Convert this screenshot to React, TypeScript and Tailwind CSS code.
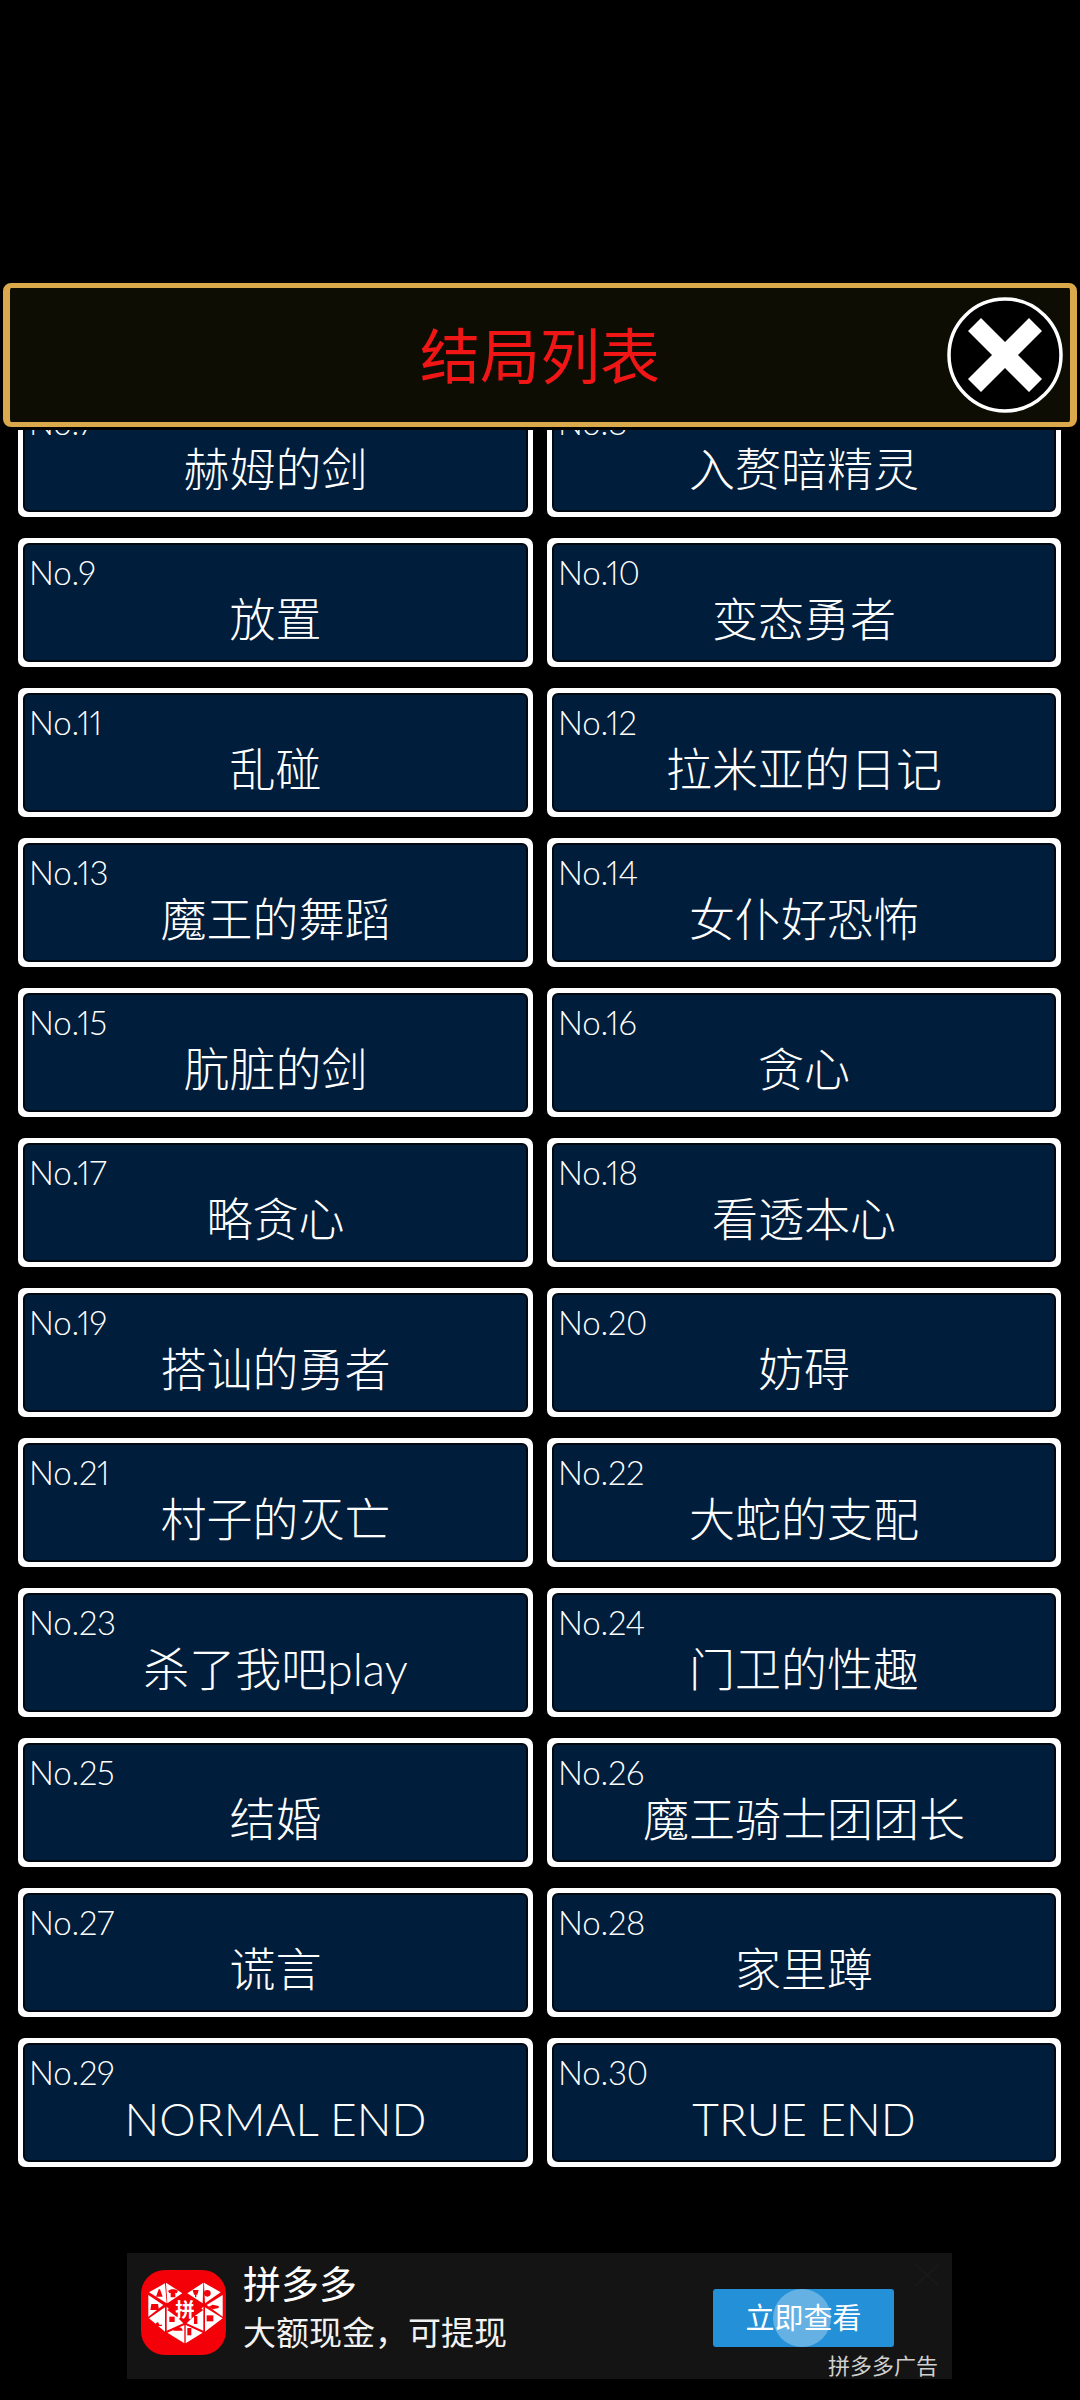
import React from 'react';

const endings: [string, string][] = [
    ['No.7', '赫姆的剑'], ['No.8', '入赘暗精灵'],
    ['No.9', '放置'], ['No.10', '变态勇者'],
    ['No.11', '乱碰'], ['No.12', '拉米亚的日记'],
    ['No.13', '魔王的舞蹈'], ['No.14', '女仆好恐怖'],
    ['No.15', '肮脏的剑'], ['No.16', '贪心'],
    ['No.17', '略贪心'], ['No.18', '看透本心'],
    ['No.19', '搭讪的勇者'], ['No.20', '妨碍'],
    ['No.21', '村子的灭亡'], ['No.22', '大蛇的支配'],
    ['No.23', '杀了我吧play'], ['No.24', '门卫的性趣'],
    ['No.25', '结婚'], ['No.26', '魔王骑士团团长'],
    ['No.27', '谎言'], ['No.28', '家里蹲'],
    ['No.29', 'NORMAL END'], ['No.30', 'TRUE END'],
];

const EndingCard: React.FC<{ no: string; name: string }> = ({ no, name }) => (
    <div className="h-[129px] rounded-[7px] bg-white p-[5px]">
        <div className="h-full rounded-[6px] bg-[#001d3b] border-2 border-[#000811] text-white font-light flex flex-col">
            <div className="pl-[4px] pt-[7px] text-[33px] leading-[40px] h-[47px] tracking-[-0.2px] proportional-nums">{no}</div>
            <div className="text-center text-[46px] leading-[54px]">{name}</div>
        </div>
    </div>
);

const CloseIcon = () => (
    <svg viewBox="0 0 116 116" className="w-[116px] h-[116px]">
        <circle cx="58" cy="58" r="56" fill="#000" stroke="#fff" strokeWidth="3.5" />
        <path d="M34 21 L58 45 L82 21 L95 34 L71 58 L95 82 L82 95 L58 71 L34 95 L21 82 L45 58 L21 34 Z" fill="#fff" />
    </svg>
);

// coordinates taken straight off a 3x crop of the logo
const heartTiles = [
    '57,97 105,70 110,130',
    '108,68 157,100 112,130',
    '55,105 100,135 55,170',
    '57,175 105,142 105,215',
    '110,140 160,190 110,212',
    '112,218 163,195 163,250',
    '167,195 218,218 167,250',
    '170,190 220,140 220,212',
    '225,142 278,175 225,215',
    '230,135 278,105 278,170',
    '222,68 272,97 225,130',
    '220,68 172,100 218,130',
];

const PddLogo = () => (
    <svg viewBox="33 30 255 255" className="w-[85px] h-[85px]">
        <rect x="33" y="30" width="255" height="255" rx="72" fill="#f40009" />
        {heartTiles.map((points) => (
            <polygon key={points} points={points} fill="#fff" />
        ))}
        <polygon points="165,112 220,150 165,188 112,150" fill="#f40009" />
        <text x="165" y="172" textAnchor="middle" fontSize="58" fontWeight="700" fill="#fff" fontFamily="Noto Sans CJK SC">拼</text>
        <g fill="#f40009">
            <path d="M86 88 l4 0 l8 22 h-20 Z" />
            <path d="M114 92 l10 -4 l10 0 l10 4 l-4 8 l-4 -2 v14 h-14 v-14 l-4 2 Z" />
            <path d="M64 132 h20 l3 18 h-26 Z" />
            <path d="M78 190 l6 -4 l4 8 l8 0 v4 h-22 Z" />
            <path d="M118 170 h16 v16 h-16 Z" />
            <path d="M130 212 a14 11 0 0 1 28 0 Z" />
            <path d="M172 204 h12 v22 h-12 Z" />
            <path d="M192 168 h10 v24 h-10 Z" />
            <path d="M230 166 h20 v18 h-20 Z" />
            <path d="M236 140 l12 -6 l18 4 v6 l-18 4 Z" />
            <circle cx="232" cy="100" r="10" />
            <path d="M188 90 h18 l-4 14 h-3 v8 h-4 v-8 h-3 Z" />
        </g>
    </svg>
);

const AdBanner = () => (
    <div className="mx-[127px] w-[825px] h-[126px] bg-[#141414] flex items-start relative font-normal">
        <div className="ml-[14px] mt-[17px]"><PddLogo /></div>
        <div className="ml-[17px] flex flex-col">
            <div className="text-[38px] leading-[46px] mt-[7px] text-white">拼多多</div>
            <div className="text-[33px] leading-[40px] mt-[6px] text-[#f2f2f2]">大额现金，可提现</div>
        </div>
        <div className="absolute left-[586px] top-[36px] w-[181px] h-[58px] rounded-[3px] bg-[#2490d8] overflow-hidden flex items-center justify-center text-[29px] text-white">
            <div className="absolute left-[60px] top-0 w-[58px] h-[58px] rounded-full bg-white/30" />
            <span className="relative">立即查看</span>
        </div>
        <div className="absolute right-[14px] bottom-0 text-[22px] leading-[26px] text-[#d0d0d0]">拼多多广告</div>
        <svg viewBox="0 0 26 24" className="absolute left-[787px] top-[10px] w-[26px] h-[24px]">
            <path d="M1 1 L25 23 M25 1 L1 23" stroke="#191919" strokeWidth="2" />
        </svg>
    </div>
);

export default function App() {
    return (
        <div className="w-[1080px] h-[2400px] bg-black pt-[283px] overflow-hidden [font-family:Lato,'Noto_Sans_CJK_SC',sans-serif]">
            <div className="ml-[3px] w-[1074px] h-[144px] rounded-[8px] bg-[#0d0d03] border-x-[7px] border-y-[5px] border-[#d9a94c] flex items-center justify-center relative">
                <h1 className="text-[60px] leading-[70px] font-normal text-[#f01616] mt-[2px]">结局列表</h1>
                <div className="absolute left-[937px] top-[9px]"><CloseIcon /></div>
            </div>
            <div className="mt-[3px] h-[1760px] overflow-hidden px-[18px]">
                <div className="-mt-[42px] grid grid-cols-[515px_514px] gap-x-[14px] gap-y-[21px]">
                    {endings.map(([no, name]) => (
                        <EndingCard key={no} no={no} name={name} />
                    ))}
                </div>
            </div>
            <div className="mt-[63px]"><AdBanner /></div>
        </div>
    );
}
